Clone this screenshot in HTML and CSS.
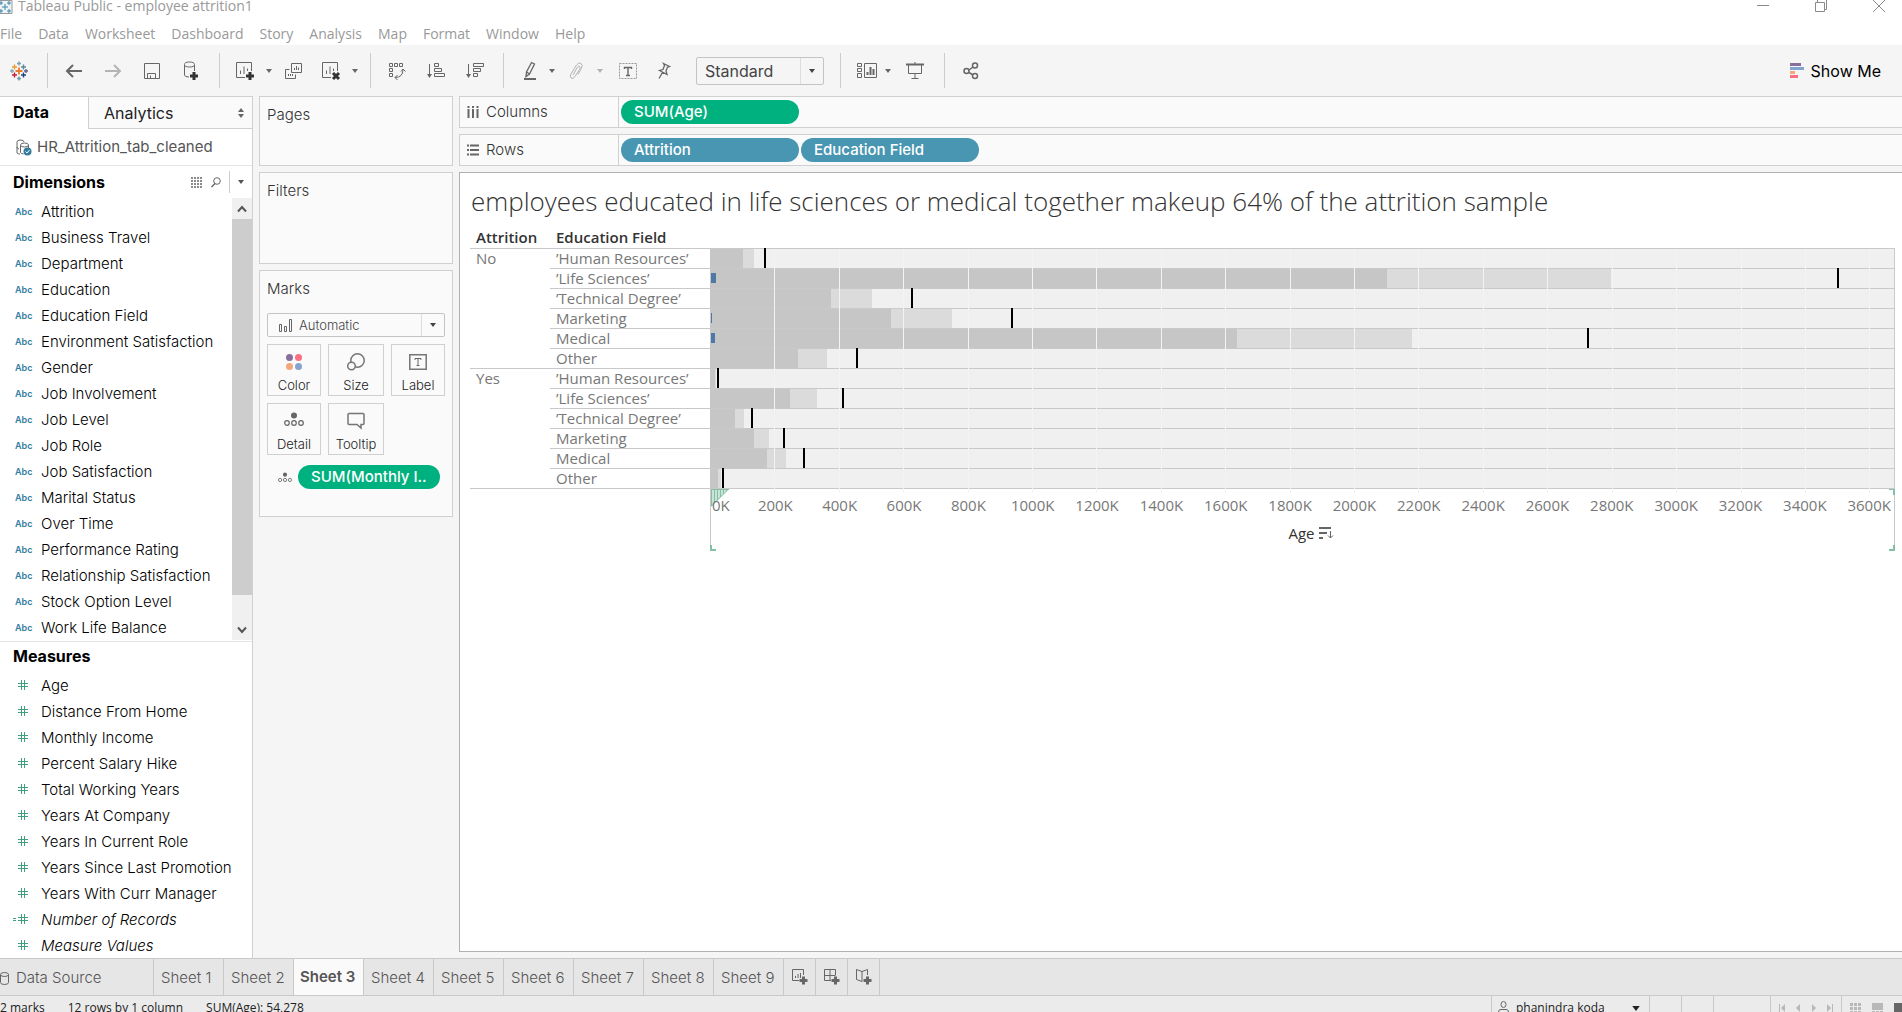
FILE: index.html
```
<!DOCTYPE html>
<html lang="en">
<head>
<meta charset="utf-8">
<title>Tableau Public - employee attrition1</title>
<link rel="stylesheet" href="styles.css">
</head>
<body>
<svg class="defs" aria-hidden="true">
  <symbol id="caret" viewBox="0 0 6 4"><path d="M0 0h6L3 4z" fill="currentColor"/></symbol>
  <symbol id="hash" viewBox="0 0 12 12"><path d="M4.500 1v10M7.500 1v10M1 4.500h10M1 7.500h10" stroke="currentColor" fill="none"/></symbol>
  <symbol id="detail" viewBox="0 0 20 15"><circle cx="10" cy="3.500" r="3" fill="currentColor"/><g fill="none" stroke="currentColor" stroke-width="1.200"><circle cx="3" cy="11" r="2.300"/><circle cx="10" cy="11" r="2.300"/><circle cx="17" cy="11" r="2.300"/></g></symbol>
</svg>

<header class="titlebar">
  <svg class="app-icon" width="13" height="14" viewBox="0 0 13 14"><path d="M-1 .5h13v13H-1" fill="#eef3f6" stroke="#999"/><path d="M5 4v6M2 7h6M1 1v4M-1 3h4M9 1v4M7 3h4M1 9v4M-1 11h4M9 9v4M7 11h4" stroke="#3d86ad" fill="none"/></svg>
  <span class="caption">Tableau Public - employee attrition1</span>
  <div class="window-controls">
    <button aria-label="Minimize"><svg width="14" height="14" viewBox="0 0 14 14"><path d="M1 6.500h12"/></svg></button>
    <button aria-label="Restore"><svg width="14" height="14" viewBox="0 0 14 14"><path d="M1.500 3.500h9v9h-9zM3.500 3V1M12.500 0v10.500H11"/></svg></button>
    <button aria-label="Close"><svg width="14" height="14" viewBox="0 0 14 14"><path d="M1 1l12 12M13 1L1 13"/></svg></button>
  </div>
</header>

<nav class="menubar">
  <a href="#">File</a><a href="#">Data</a><a href="#">Worksheet</a><a href="#">Dashboard</a><a href="#">Story</a><a href="#">Analysis</a><a href="#">Map</a><a href="#">Format</a><a href="#">Window</a><a href="#">Help</a>
</nav>

<div class="toolbar">
  <button class="home" aria-label="Start page"><svg width="18" height="20" viewBox="0 0 18 20"><g fill="none" stroke-width="1.400"><path d="M9 6.500v7M5.500 10h7" stroke="#eb7a2c" stroke-width="1.800"/><path d="M4.500 3.500v5M2 6h5" stroke="#e8a02c"/><path d="M13.500 3.500v5M11 6h5" stroke="#5b879b"/><path d="M4.500 11.500v5M2 14h5" stroke="#c72035"/><path d="M13.500 11.500v5M11 14h5" stroke="#1f457e"/><path d="M9 .5v4M7 2.500h4" stroke="#7a9fb0"/><path d="M9 15.500v4M7 17.500h4" stroke="#7199a6"/><path d="M2 8v4M0 10h4" stroke="#8aa6c4"/><path d="M16 8v4M14 10h4" stroke="#5c6692"/></g></svg></button>
  <div class="group g-file">
    <button aria-label="Undo"><svg width="18" height="18" viewBox="0 0 18 18"><path d="M17 9H2M8 3L2 9l6 6" stroke-width="2"/></svg></button>
    <button aria-label="Redo" disabled><svg width="18" height="18" viewBox="0 0 18 18"><path d="M1 9h15M10 3l6 6-6 6" stroke-width="2"/></svg></button>
    <button aria-label="Save"><svg width="18" height="18" viewBox="0 0 18 18"><path d="M1.500 1.500h15v15h-15zM4.500 16v-4.500h8V16M7.500 16v-2.500"/></svg></button>
    <button aria-label="New data source"><svg width="18" height="20" viewBox="0 0 18 20"><path d="M2.500 4v10q0 2 4.500 2M12.500 4v6"/><ellipse cx="7.500" cy="3.500" rx="5" ry="2.500"/><path d="M12 11v8M8 15h8" class="bold"/></svg></button>
  </div>
  <div class="group g-sheet">
    <button aria-label="New worksheet"><svg width="20" height="20" viewBox="0 0 20 20"><path d="M10 16.500H1.500v-15h15V10M5.500 13V9.500M9 13V5.500M12.500 10V7.500" /><path d="M15 11v8M11 15h8" class="bold"/></svg></button>
    <button aria-label="New worksheet options"><svg width="6" height="4"><use href="#caret"/></svg></button>
    <button aria-label="Duplicate"><svg width="18" height="18" viewBox="0 0 18 18"><path d="M7.500 1.500h10v9h-10zM5.500 7.500h-4v9h10v-4M10.500 8V6M12.500 8V4M14.500 8V5.500M4.500 14v-2M6.500 14v-2M8.500 14v-2"/></svg></button>
    <button aria-label="Clear sheet"><svg width="20" height="20" viewBox="0 0 20 20"><path d="M10 16.500H1.500v-15h15V10M5.500 13V9.500M9 13V5.500M12.500 10V7.500"/><path d="M12 12l6 6M18 12l-6 6" class="bold"/></svg></button>
    <button aria-label="Clear options"><svg width="6" height="4"><use href="#caret"/></svg></button>
  </div>
  <div class="group g-sort">
    <button aria-label="Swap rows and columns"><svg width="18" height="18" viewBox="0 0 18 18"><path d="M1.500 1.500h3v3h-3zM6.500 1.500h3v3h-3zM11.500 1.500h3v3h-3zM1.500 6.500h3v3h-3zM1.500 11.500h3v3h-3zM7 15.500q8 0 8-8M13 9.500l2-2.500 2.500 2.500M9.500 13L7 15.500 9.500 18"/></svg></button>
    <button aria-label="Sort ascending"><svg width="20" height="18" viewBox="0 0 20 18"><path d="M3.500 2v12M8.500 1.500h4v3h-4zM8.500 6.500h7v3h-7zM8.500 11.500h10v3h-10z"/><path d="M1 12h5l-2.500 4z" class="solid"/></svg></button>
    <button aria-label="Sort descending"><svg width="20" height="18" viewBox="0 0 20 18"><path d="M3.500 2v12M8.500 1.500h10v3h-10zM8.500 6.500h7v3h-7zM8.500 11.500h4v3h-4z"/><path d="M1 12h5l-2.500 4z" class="solid"/></svg></button>
  </div>
  <div class="group g-mark">
    <button aria-label="Highlight"><svg width="14" height="20" viewBox="0 0 14 20"><path d="M8.500 1.500l3 1.500-5 10-3.500 2.500.5-4.500zM3.500 11l3 2" stroke-width="1.300"/><path d="M1 18h12" stroke-width="2"/></svg></button>
    <button aria-label="Highlight options"><svg width="6" height="4"><use href="#caret"/></svg></button>
    <button aria-label="Group members" disabled><svg width="14" height="18" viewBox="0 0 14 18"><path d="M4 13l4.500-8q1.500-2 2.500 0 .5 1-.5 2.500L6 14.500q-2 3-4 1.500-1.500-1.500 0-4L7.500 3q2-3 4.500-1.500 2 1.500.5 4.500L9 12.500"/></svg></button>
    <button aria-label="Group options" disabled><svg width="6" height="4"><use href="#caret"/></svg></button>
    <button aria-label="Show mark labels"><svg width="18" height="16" viewBox="0 0 18 16"><path d="M.5.5h17v15H.5z" class="dashed"/><path d="M5.500 6V4.500h7V6M9 4.500v8M7 12.500h4" stroke-width="1.400"/></svg></button>
    <button aria-label="Fix axes"><svg width="14" height="18" viewBox="0 0 14 18"><path d="M6.500 1.500l6 3-2 .5-1.500 4 1 3.500-7.500-4L6 7.500l1.500-4zM5.500 10.500l-3.500 6" stroke-width="1.300"/></svg></button>
    <label class="combo combo-fit">
      <select aria-label="Fit"><option>Standard</option></select>
      <svg width="6" height="4"><use href="#caret"/></svg>
    </label>
  </div>
  <div class="group g-view">
    <button aria-label="Show/hide cards"><svg width="20" height="18" viewBox="0 0 20 18"><path d="M.5 1.500h4v3h-4zM.5 6.500h4v3h-4zM.5 11.500h4v4h-4zM7.500 1.500h12v14h-12z"/><path d="M9.500 13v-3h2v3zM12.500 13V5h2v8zM15.500 13V7h2v6z" class="solid"/></svg></button>
    <button aria-label="Card options"><svg width="6" height="4"><use href="#caret"/></svg></button>
    <button aria-label="Presentation mode"><svg width="18" height="18" viewBox="0 0 18 18"><path d="M2.500 3v8.500h13V3M9 12v4.500M5.500 16.500h7M9 0v2"/><path d="M0 2.500h18" stroke-width="2"/></svg></button>
  </div>
  <div class="group g-share">
    <button aria-label="Share"><svg width="16" height="18" viewBox="0 0 16 18"><g stroke-width="1.500"><circle cx="3.500" cy="9" r="2.500"/><circle cx="12" cy="3.500" r="2.500"/><circle cx="12" cy="14" r="2.500"/><path d="M6 8l4-3M6 10.500l4 2.500"/></g></svg></button>
  </div>
  <button class="show-me"><svg width="14" height="15" viewBox="0 0 14 15"><path fill="#866f9b" d="M0 0h11v3H0z"/><path fill="#83a4cf" d="M0 4h14v3H0z"/><path fill="#f4a77d" d="M0 8h5v3H0z"/><path fill="#fa6f81" d="M0 12h8v3H0z"/></svg>Show Me</button>
</div>

<div class="workspace">
  <aside class="sidebar">
    <div class="pane-tabs">
      <button class="active">Data</button>
      <button>Analytics<svg width="6" height="10" viewBox="0 0 6 10"><path d="M0 4l3-4 3 4zM0 6h6l-3 4z" fill="#666"/></svg></button>
    </div>
    <a class="source" href="#"><svg width="17" height="17" viewBox="0 0 17 17"><g fill="none" stroke="#666"><path d="M2 14V3q0-2 3.500-2T9 3M2 14q2 1.500 3 1M2 8q0 1.500 2 2M5.500 6.500v7q0 1 3 1.500"/><ellipse cx="9.500" cy="6" rx="4" ry="2"/><path d="M13.500 6v3"/></g><circle cx="12.500" cy="12.500" r="4" fill="#357d9f"/><path d="M10.500 12.500l1.500 1.500 2.500-3" fill="none" stroke="#fff"/></svg>HR_Attrition_tab_cleaned</a>
    <section class="dimensions">
      <div class="pane-head">
        <h2>Dimensions</h2>
        <button aria-label="View data"><svg width="12" height="11" viewBox="0 0 12 11"><path d="M0 1h12M0 4h12M0 7h12M0 10h12" stroke="#666" stroke-dasharray="2 1" stroke-width="1.400"/></svg></button>
        <button aria-label="Find field"><svg width="10" height="11" viewBox="0 0 10 11"><circle cx="6" cy="4" r="3.300" fill="none" stroke="#666"/><path d="M4 6.500L.5 10" stroke="#666" stroke-width="1.500"/></svg></button>
        <button class="pane-menu" aria-label="Pane menu"><svg width="6" height="4"><use href="#caret"/></svg></button>
      </div>
      <div class="scroll-area">
        <ul class="fields">
          <li><b>Abc</b>Attrition</li><li><b>Abc</b>Business Travel</li><li><b>Abc</b>Department</li><li><b>Abc</b>Education</li><li><b>Abc</b>Education Field</li><li><b>Abc</b>Environment Satisfaction</li><li><b>Abc</b>Gender</li><li><b>Abc</b>Job Involvement</li><li><b>Abc</b>Job Level</li><li><b>Abc</b>Job Role</li><li><b>Abc</b>Job Satisfaction</li><li><b>Abc</b>Marital Status</li><li><b>Abc</b>Over Time</li><li><b>Abc</b>Performance Rating</li><li><b>Abc</b>Relationship Satisfaction</li><li><b>Abc</b>Stock Option Level</li><li><b>Abc</b>Work Life Balance</li>
        </ul>
        <div class="scrollbar">
          <button aria-label="Scroll up"><svg width="10" height="8" viewBox="0 0 10 8"><path d="M1 6.500l4-4.500 4 4.500"/></svg></button>
          <div class="thumb"></div>
          <button aria-label="Scroll down"><svg width="10" height="8" viewBox="0 0 10 8"><path d="M1 1.500L5 6l4-4.500"/></svg></button>
        </div>
      </div>
    </section>
    <section class="measures">
      <h2>Measures</h2>
      <ul class="fields">
        <li><svg width="12" height="12"><use href="#hash"/></svg>Age</li>
        <li><svg width="12" height="12"><use href="#hash"/></svg>Distance From Home</li>
        <li><svg width="12" height="12"><use href="#hash"/></svg>Monthly Income</li>
        <li><svg width="12" height="12"><use href="#hash"/></svg>Percent Salary Hike</li>
        <li><svg width="12" height="12"><use href="#hash"/></svg>Total Working Years</li>
        <li><svg width="12" height="12"><use href="#hash"/></svg>Years At Company</li>
        <li><svg width="12" height="12"><use href="#hash"/></svg>Years In Current Role</li>
        <li><svg width="12" height="12"><use href="#hash"/></svg>Years Since Last Promotion</li>
        <li><svg width="12" height="12"><use href="#hash"/></svg>Years With Curr Manager</li>
        <li class="generated"><svg class="calculated" width="16" height="12" viewBox="0 0 16 12"><path d="M0 5.500h3M0 7.500h3" stroke="currentColor"/><use href="#hash" x="4" width="12" height="12"/></svg>Number of Records</li>
        <li class="generated"><svg width="12" height="12"><use href="#hash"/></svg>Measure Values</li>
      </ul>
    </section>
  </aside>

  <div class="cards">
    <section class="card pages"><h3>Pages</h3></section>
    <section class="card filters"><h3>Filters</h3></section>
    <section class="card marks">
      <h3>Marks</h3>
      <label class="combo combo-mark">
        <svg class="lead" width="14" height="13" viewBox="0 0 14 13"><path d="M.5 5.500h2v7h-2zM5.500 7.500h2v5h-2zM10.500.5h2v12h-2z" fill="none" stroke="#666"/></svg>
        <select aria-label="Mark type"><option>Automatic</option></select>
        <svg width="6" height="4"><use href="#caret"/></svg>
      </label>
      <div class="mark-buttons">
        <button><svg width="18" height="18" viewBox="0 0 18 18"><circle cx="4.500" cy="4.500" r="3.500" fill="#866f9b"/><circle cx="13.500" cy="4.500" r="3.500" fill="#fa6f81"/><circle cx="4.500" cy="13.500" r="3.500" fill="#f4a77d"/><circle cx="13.500" cy="13.500" r="3.500" fill="#83a4cf"/></svg>Color</button>
        <button><svg width="18" height="18" viewBox="0 0 18 18"><g fill="#fafafa" stroke="#767676" stroke-width="1.500"><circle cx="10.500" cy="7.500" r="6.700"/><circle cx="4.500" cy="13" r="3.800"/></g></svg>Size</button>
        <button><svg width="18" height="18" viewBox="0 0 18 18"><path d="M.8 1.800h16.400v14.400H.8z" fill="none" stroke="#767676" stroke-width="1.500"/><path d="M6 7V5.500h6V7M9 5.500v7M7.500 12.500h3" fill="none" stroke="#666"/></svg>Label</button>
        <button><svg width="20" height="15"><use href="#detail"/></svg>Detail</button>
        <button><svg width="18" height="18" viewBox="0 0 18 18"><path d="M2 1.500h14q1 0 1 1v9q0 1-1 1h-2V16l-4-3.500H2q-1 0-1-1v-9q0-1 1-1z" fill="none" stroke="#767676" stroke-width="1.500"/></svg>Tooltip</button>
      </div>
      <div class="mark-pill"><svg width="14" height="11"><use href="#detail"/></svg><button class="pill measure">SUM(Monthly I..</button></div>
    </section>
  </div>

  <main class="canvas">
    <div class="shelf">
      <div class="shelf-name"><svg width="12" height="12" viewBox="0 0 12 12"><path d="M1.500 0v2M6 0v2M10.500 0v2M1.500 3v9M6 3v9M10.500 3v9" stroke="#666" stroke-width="2"/></svg>Columns</div>
      <button class="pill measure">SUM(Age)</button>
    </div>
    <div class="shelf">
      <div class="shelf-name"><svg width="12" height="12" viewBox="0 0 12 12"><path d="M0 1.500h2M0 6h2M0 10.500h2M3 1.500h9M3 6h9M3 10.500h9" stroke="#666" stroke-width="2"/></svg>Rows</div>
      <button class="pill dimension">Attrition</button>
      <button class="pill dimension">Education Field</button>
    </div>
    <section class="view">
      <h1>employees educated in life sciences or medical together makeup 64% of the attrition sample</h1>
      <div class="chart">
        <table>
          <colgroup><col class="c-attrition"><col class="c-field"><col></colgroup>
          <thead><tr><th>Attrition</th><th>Education Field</th><th></th></tr></thead>
          <tbody>
            <tr><td rowspan="6">No</td><td>’Human Resources’</td><td><div class="plot"><i class="b80" style="width:3.7%"></i><i class="b60" style="width:2.8%"></i><i class="ref" style="left:4.55%"></i></div></td></tr>
            <tr><td>’Life Sciences’</td><td><div class="plot"><i class="b80" style="width:76.1%"></i><i class="b60" style="width:57.2%"></i><i class="bar" style="width:0.5%"></i><i class="ref" style="left:95.2%"></i></div></td></tr>
            <tr><td>’Technical Degree’</td><td><div class="plot"><i class="b80" style="width:13.7%"></i><i class="b60" style="width:10.2%"></i><i class="ref" style="left:17%"></i></div></td></tr>
            <tr><td>Marketing</td><td><div class="plot"><i class="b80" style="width:20.4%"></i><i class="b60" style="width:15.3%"></i><i class="bar" style="width:0.17%"></i><i class="ref" style="left:25.4%"></i></div></td></tr>
            <tr><td>Medical</td><td><div class="plot"><i class="b80" style="width:59.3%"></i><i class="b60" style="width:44.5%"></i><i class="bar" style="width:0.42%"></i><i class="ref" style="left:74.1%"></i></div></td></tr>
            <tr><td>Other</td><td><div class="plot"><i class="b80" style="width:9.9%"></i><i class="b60" style="width:7.4%"></i><i class="ref" style="left:12.3%"></i></div></td></tr>
          </tbody>
          <tbody>
            <tr><td rowspan="6">Yes</td><td>’Human Resources’</td><td><div class="plot"><i class="b80" style="width:0.5%"></i><i class="b60" style="width:0.4%"></i><i class="ref" style="left:0.6%"></i></div></td></tr>
            <tr><td>’Life Sciences’</td><td><div class="plot"><i class="b80" style="width:9%"></i><i class="b60" style="width:6.75%"></i><i class="ref" style="left:11.15%"></i></div></td></tr>
            <tr><td>’Technical Degree’</td><td><div class="plot"><i class="b80" style="width:2.85%"></i><i class="b60" style="width:2.1%"></i><i class="ref" style="left:3.45%"></i></div></td></tr>
            <tr><td>Marketing</td><td><div class="plot"><i class="b80" style="width:5%"></i><i class="b60" style="width:3.7%"></i><i class="ref" style="left:6.15%"></i></div></td></tr>
            <tr><td>Medical</td><td><div class="plot"><i class="b80" style="width:6.4%"></i><i class="b60" style="width:4.8%"></i><i class="ref" style="left:7.85%"></i></div></td></tr>
            <tr><td>Other</td><td><div class="plot"><i class="b80" style="width:0.9%"></i><i class="b60" style="width:0.65%"></i><i class="ref" style="left:1%"></i></div></td></tr>
          </tbody>
        </table>
        <div class="gridlines"><i></i><i></i><i></i><i></i><i></i><i></i><i></i><i></i><i></i><i></i><i></i><i></i><i></i><i></i><i></i><i></i><i></i><i></i></div>
      </div>
      <div class="axis">
        <svg class="handle" width="18" height="18" viewBox="0 0 18 18"><path d="M0 0h18L0 18z" fill="#c9e5d8"/><path d="M.5 0v17M3.500 0v14M6.500 0v11M9.500 0v8M12.500 0v5M15.500 0v2M0 .5h18M0 17.500L17.500 0" stroke="#86bfa6" fill="none"/></svg>
        <i class="corner tr"></i><i class="corner br"></i><i class="corner bl"></i>
        <span class="zero">0K</span>
        <div class="ticks"><span>200K</span><span>400K</span><span>600K</span><span>800K</span><span>1000K</span><span>1200K</span><span>1400K</span><span>1600K</span><span>1800K</span><span>2000K</span><span>2200K</span><span>2400K</span><span>2600K</span><span>2800K</span><span>3000K</span><span>3200K</span><span>3400K</span><span>3600K</span></div>
        <div class="axis-title">Age<svg width="15" height="12" viewBox="0 0 15 12"><path d="M0 0h12v2H0zM0 5h8v2H0zM0 10h4v2H0z" fill="#666"/><path d="M11.500 4v7M9 8.500l2.500 2.500L14 8.500" fill="none" stroke="#666"/></svg></div>
      </div>
    </section>
  </main>
</div>

<nav class="sheet-tabs">
  <a class="data-source" href="#"><svg width="9" height="13" viewBox="0 0 9 13"><path d="M.5 2.500v8q0 2 4 2t4-2v-8" fill="none" stroke="#666"/><ellipse cx="4.500" cy="2.500" rx="4" ry="2" fill="none" stroke="#666"/></svg>Data Source</a>
  <a href="#">Sheet 1</a><a href="#">Sheet 2</a><a class="active" href="#">Sheet 3</a><a href="#">Sheet 4</a><a href="#">Sheet 5</a><a href="#">Sheet 6</a><a href="#">Sheet 7</a><a href="#">Sheet 8</a><a href="#">Sheet 9</a>
  <button aria-label="New worksheet"><svg width="16" height="16" viewBox="0 0 16 16"><path d="M7 11.500H.5V.5h11V6M3.500 9V7M6 9V5M8.500 9V4"/><path d="M11.500 7.500v8M7.500 11.500h8" class="bold"/></svg></button>
  <button aria-label="New dashboard"><svg width="16" height="16" viewBox="0 0 16 16"><path d="M7 11.500H.5V.5h11V6M.5 6.500h11M6 .5v11"/><path d="M11.500 7.500v8M7.500 11.500h8" class="bold"/></svg></button>
  <button aria-label="New story"><svg width="16" height="16" viewBox="0 0 16 16"><path d="M6 2.500L.5.500v10l5.500 2V2.500L11.500.5V6"/><path d="M11.500 7.500v8M7.500 11.500h8" class="bold"/></svg></button>
</nav>

<footer class="status">
  <span>2 marks</span><span>12 rows by 1 column</span><span>SUM(Age): 54,278</span>
  <div class="status-right">
    <button class="user"><svg width="11" height="14" viewBox="0 0 11 14"><g fill="none" stroke="#666"><ellipse cx="5.500" cy="3.500" rx="2.500" ry="3"/><path d="M.5 14v-3q0-2.500 2.500-2.500h5q2.500 0 2.500 2.500v3"/></g></svg>phanindra koda<svg class="drop" width="8" height="5"><use href="#caret"/></svg></button>
    <i class="cell"></i><i class="cell"></i><i class="cell wide"></i>
    <div class="pager">
      <button aria-label="First"><svg width="6" height="8" viewBox="0 0 6 8"><path d="M0 0h1v8H0zM6 0v8L2 4z"/></svg></button>
      <button aria-label="Previous"><svg width="6" height="8" viewBox="0 0 6 8"><path d="M5 0v8L1 4z"/></svg></button>
      <button aria-label="Next"><svg width="6" height="8" viewBox="0 0 6 8"><path d="M1 0v8l4-4z"/></svg></button>
      <button aria-label="Last"><svg width="6" height="8" viewBox="0 0 6 8"><path d="M5 0h1v8H5zM0 0v8l4-4z"/></svg></button>
    </div>
    <div class="sorters">
      <button aria-label="Sheet sorter"><svg width="11" height="11" viewBox="0 0 11 11"><path d="M0 0h3v3H0zM4 0h3v3H4zM8 0h3v3H8zM0 4h3v3H0zM4 4h3v3H4zM8 4h3v3H8zM0 8h3v3H0zM4 8h3v3H4zM8 8h3v3H8z"/></svg></button>
      <button aria-label="Filmstrip"><svg width="11" height="11" viewBox="0 0 11 11"><path d="M0 0h11v7H0zM0 8h3v3H0zM4 8h3v3H4zM8 8h3v3H8z"/></svg></button>
      <button class="active" aria-label="Tabs"><svg width="11" height="11" viewBox="0 0 11 11"><path d="M0 0h11v11H0z"/></svg></button>
    </div>
  </div>
</footer>
</body>
</html>
```
FILE: styles.css
```
* { box-sizing: border-box; }
body {
  margin: 0;
  height: 100vh;
  display: flex;
  flex-direction: column;
  overflow: hidden;
  background: #f5f5f5;
  color: #000;
  font: 300 15px/20px Inter, sans-serif;
}
button, select { font: inherit; color: inherit; border: 0; padding: 0; background: none; }
button { display: flex; align-items: center; justify-content: center; }
a { color: inherit; text-decoration: none; }
h1, h2, h3 { margin: 0; }
ul { margin: 0; padding: 0; list-style: none; }
svg { flex: none; display: block; }
.defs { position: absolute; width: 0; height: 0; }

/* window chrome */
.titlebar { display: flex; height: 22px; background: #fff; color: #999; font: 400 14px/12px "Open Sans", sans-serif; }
.caption { margin-left: 5px; }
.window-controls { margin-left: auto; display: flex; gap: 44px; padding-right: 16px; }
.window-controls button { height: 12px; }
.window-controls path { fill: none; stroke: #8a8a8a; }
.menubar { display: flex; gap: 16px; height: 23px; background: #fff; color: #999; font: 400 14px/24px "Open Sans", sans-serif; }

/* toolbar */
.toolbar { display: flex; align-items: center; height: 51px; color: #666; }
.home { width: 37px; margin-right: 10px; }
.group { display: grid; align-items: center; height: 35px; border-left: 1px solid #ccc; }
.group button { height: 24px; }
.group path, .group circle, .group ellipse { fill: none; stroke: currentColor; }
.group .solid { fill: currentColor; stroke: none; }
.group .bold { stroke: #333; stroke-width: 3; }
.group .dashed { stroke: #999; stroke-dasharray: 2 1; }
.group button:disabled { color: #b4b4b4; }
.g-file { grid-template-columns: repeat(4, 39px); padding: 0 9px 0 6px; }
.g-sheet { grid-template-columns: 38px 10px 38px 38px 10px; padding: 0 10px 0 6px; }
.g-sort { grid-template-columns: repeat(3, 39px); padding: 0 9px 0 6px; }
.g-mark { grid-template-columns: 36px 8px 40px 8px 47px 26px 147px; padding: 0 16px 0 8px; }
.g-view { grid-template-columns: 34px 8px 46px; padding: 0 6px 0 9px; }
.g-share { grid-template-columns: 38px; padding-left: 7px; }
.show-me { margin-left: auto; margin-right: 21px; gap: 7px; color: #000; font-size: 16px; font-weight: 400; }

.combo { position: relative; display: flex; align-items: center; border: 1px solid #c4c4c4; border-radius: 2px; color: #444; }
.combo select { flex: 1; height: 100%; appearance: none; border-right: 1px solid #ddd; outline: none; }
.combo-fit { height: 28px; margin-left: 19px; }
.combo-fit select { padding-left: 8px; font-size: 16px; font-weight: 400; }
.combo-fit > svg { margin: 0 8px; }

/* workspace */
.workspace { flex: 1; min-height: 0; display: flex; }
.sidebar { width: 253px; flex: none; display: flex; flex-direction: column; background: #fff; border-top: 1px solid #d0d0d0; border-right: 1px solid #d0d0d0; overflow: hidden; }
.pane-tabs { display: flex; height: 32px; flex: none; font-size: 16px; }
.pane-tabs button { flex: 1; justify-content: space-between; padding: 0 8px 0 15px; background: #fafafa; border-left: 1px solid #d0d0d0; border-bottom: 1px solid #d0d0d0; font-weight: 400; color: #222; }
.pane-tabs .active { flex: 0 0 88px; padding: 0 0 2px 13px; background: #fff; border: 0; font-weight: 700; color: #000; }
.source { display: flex; align-items: center; gap: 5px; height: 37px; flex: none; padding-left: 15px; border-bottom: 1px solid #e4e4e4; color: #555; font-weight: 400; }
.pane-head { display: flex; align-items: center; height: 32px; padding-left: 13px; }
h2 { font-size: 16px; font-weight: 700; }
.pane-head h2 { margin-right: auto; }
.pane-head button { margin-right: 8px; }
.pane-head .pane-menu { width: 23px; height: 22px; margin: 0; border-left: 1px solid #ccc; color: #555; }
.scroll-area { display: flex; justify-content: space-between; border-bottom: 1px solid #e4e4e4; padding-bottom: 1px; }
.fields li { display: flex; align-items: center; height: 26px; padding-top: 2px; white-space: nowrap; }
.fields b { width: 41px; padding-left: 15px; color: #357d9f; font-size: 9px; font-weight: 600; }
.fields svg { margin: 0 12px 2px 17px; color: #3f9f7f; }
.fields .generated { font-style: italic; }
.fields .calculated { margin-left: 13px; }
.scrollbar { width: 20px; display: flex; flex-direction: column; background: #f0f0f0; }
.scrollbar button { height: 21px; }
.scrollbar path { fill: none; stroke: #555; stroke-width: 2; }
.thumb { flex: 1; margin-bottom: 24px; background: #cdcdcd; }
.measures h2 { height: 30px; padding-left: 13px; line-height: 28px; }

/* cards */
.cards { width: 194px; flex: none; margin: 0 6px; display: flex; flex-direction: column; gap: 6px; }
.card { border: 1px solid #d0d0d0; background: #fafafa; padding: 8px 7px; }
h3 { font-size: 15px; font-weight: 300; color: #333; }
.pages { height: 70px; }
.filters { height: 92px; }
.marks { height: 247px; }
.combo-mark { height: 24px; margin-top: 14px; padding-left: 11px; gap: 6px; font-size: 13px; }
.combo-mark > svg:last-child { margin: 0 8px 0 2px; }
.mark-buttons { display: grid; grid-template-columns: 54px 56px 54px; gap: 7px; margin-top: 7px; }
.mark-buttons button { height: 52px; flex-direction: column; justify-content: space-between; padding: 8px 0 0; border: 1px solid #d0d0d0; color: #222; font-size: 13px; }
.mark-buttons svg { color: #666; }
.mark-pill { display: flex; align-items: center; gap: 6px; margin: 10px 4px 0 11px; color: #666; }
.pill { height: 24px; width: 178px; justify-content: flex-start; padding-left: 13px; border-radius: 12px; color: #fff; font-size: 15px; font-weight: 500; }
.measure { background: #00b180; }
.dimension { background: #4996b2; }
.mark-pill .pill { width: 142px; }

/* shelves and view */
.canvas { flex: 1; min-width: 0; display: flex; flex-direction: column; gap: 6px; padding-bottom: 6px; }
.shelf { display: flex; align-items: center; gap: 2px; height: 32px; flex: none; background: #fafafa; border: 1px solid #d0d0d0; border-right: 0; }
.shelf-name { display: flex; align-items: center; gap: 7px; width: 159px; height: 100%; padding-left: 7px; border-right: 1px solid #d0d0d0; color: #333; }
.view { flex: 1; background: #fff; border: 1px solid #b0b0b0; border-right: 0; padding: 10px 7px 0 10px; font-family: "Open Sans", sans-serif; }
h1 { margin-bottom: 9px; padding-left: 1px; font-size: 26px; line-height: 36px; font-weight: 300; color: #333; white-space: nowrap; }
.chart { position: relative; }
table { width: 100%; table-layout: fixed; border-collapse: separate; border-spacing: 0; line-height: 19px; color: #777; font-weight: 400; }
.c-attrition { width: 80px; }
.c-field { width: 160px; }
th { height: 21px; padding: 0 0 2px 6px; line-height: 18px; text-align: left; font-size: 15px; font-weight: 600; color: #333; border-bottom: 1px solid #c9c9c9; white-space: nowrap; }
td { height: 20px; padding: 0 0 0 6px; vertical-align: top; border-bottom: 1px solid #c9c9c9; white-space: nowrap; }
td:last-child { padding: 0; border-left: 1px solid #c9c9c9; border-right: 1px solid #c9c9c9; }
.plot { position: relative; height: 19px; margin-left: -1px; background: #f0f0f0; }
.plot i { position: absolute; left: 0; top: 0; height: 19px; }
.plot .b80 { background: #dbdbdb; }
.plot .b60 { background: #c6c6c6; }
.plot .bar { top: 4px; height: 10px; background: #4e79a7; border-left: 1px solid #c6c6c6; }
.plot .ref { top: -1px; height: 20px; width: 2px; background: #000; z-index: 2; }
.gridlines { position: absolute; inset: 21px 0 -4px 241px; display: flex; }
.gridlines i { flex: 0 0 5.44%; border-right: 1px solid #f3f3f3; }

.axis { position: relative; height: 62px; margin-left: 240px; border: solid #c9c9c9; border-width: 0 1px; color: #777; font-weight: 400; }
.handle { position: absolute; left: 0; top: 0; }
.corner { position: absolute; width: 6px; height: 6px; border: 0 solid #86bfa6; }
.tr { top: 0; right: -1px; border-width: 1px 2px 0 0; }
.br { bottom: 0; right: -1px; border-width: 0 2px 2px 0; }
.bl { bottom: 0; left: -1px; border-width: 0 0 2px 2px; }
.zero { position: absolute; left: 1px; top: 6px; }
.ticks { display: flex; padding-top: 6px; }
.ticks span { flex: 0 0 5.44%; display: flex; justify-content: center; }
.ticks span:first-child { margin-left: 2.72%; }
.axis-title { display: flex; align-items: center; justify-content: center; gap: 4px; margin-top: 8px; padding-left: 17px; color: #333; }

/* bottom bars */
.sheet-tabs { display: flex; height: 38px; flex: none; background: #e6e6e6; border: solid #c9c9c9; border-width: 1px 0; color: #555; }
.sheet-tabs a { display: flex; align-items: center; width: 70px; padding: 2px 0 0 7px; border-right: 1px solid #c9c9c9; white-space: nowrap; }
.sheet-tabs .data-source { width: 154px; padding-left: 0; gap: 7px; }
.sheet-tabs .active { padding: 0 0 0 6px; background: #fafafa; font-weight: 600; }
.sheet-tabs button { width: 32px; border-right: 1px solid #c9c9c9; }
.sheet-tabs button path { fill: none; stroke: #666; }
.sheet-tabs button .bold { stroke-width: 3; }
.status { display: flex; gap: 23px; height: 16px; flex: none; overflow: hidden; background: #ebebeb; color: #222; font: 400 12px/24px "Open Sans", sans-serif; }
.status-right { display: flex; margin-left: auto; }
.status-right > * { height: 24px; border-left: 1px solid #c9c9c9; }
.user { width: 158px; justify-content: flex-start; gap: 7px; padding-left: 6px; }
.user .drop { margin-left: auto; margin-right: 9px; }
.cell { width: 32px; }
.cell.wide { width: 57px; }
.pager { display: flex; gap: 10px; width: 71px; padding-left: 8px; fill: #b8b8b8; }
.sorters { display: flex; gap: 11px; width: 61px; padding-left: 8px; fill: #b8b8b8; overflow: hidden; }
.sorters .active { fill: #666; }
```
